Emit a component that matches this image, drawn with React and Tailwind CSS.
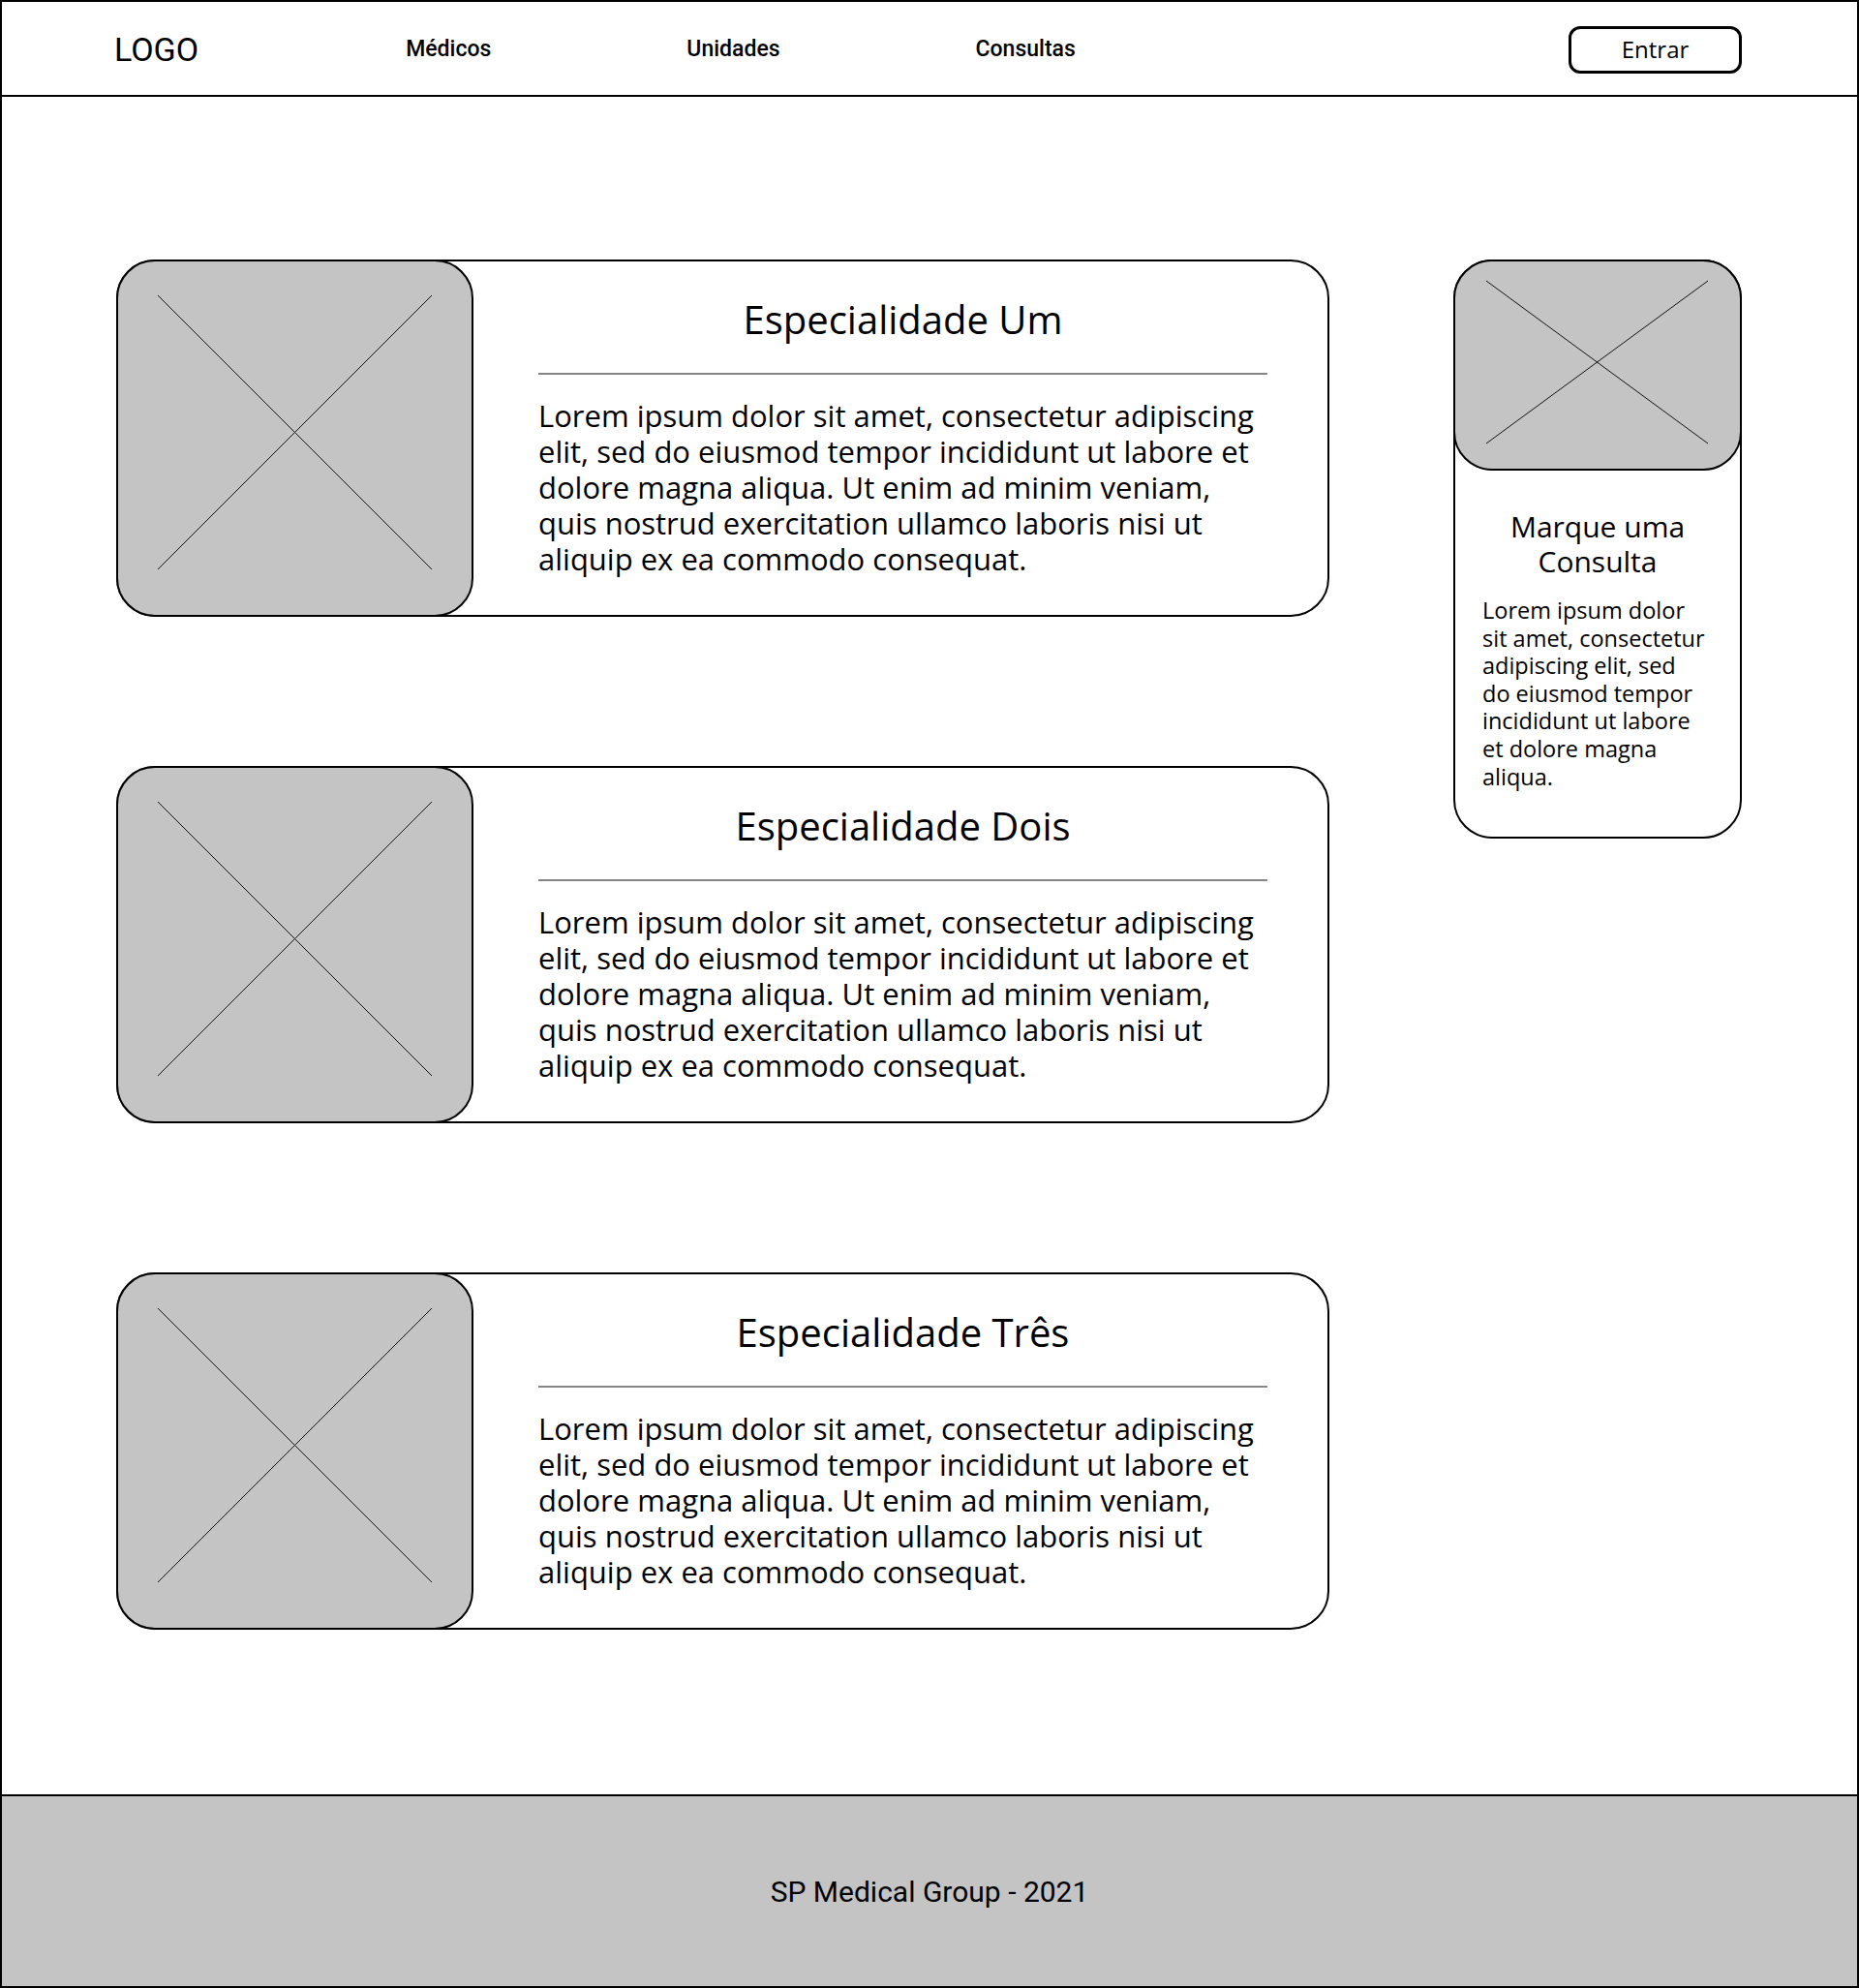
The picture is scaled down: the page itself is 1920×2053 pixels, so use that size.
import React from 'react'

const CARD_LINES = [
  'Lorem ipsum dolor sit amet, consectetur adipiscing',
  'elit, sed do eiusmod tempor incididunt ut labore et',
  'dolore magna aliqua. Ut enim ad minim veniam,',
  'quis nostrud exercitation ullamco laboris nisi ut',
  'aliquip ex ea commodo consequat.',
]

const SIDE_LINES = [
  'Lorem ipsum dolor',
  'sit amet, consectetur',
  'adipiscing elit, sed',
  'do eiusmod tempor',
  'incididunt ut labore',
  'et dolore magna',
  'aliqua.',
]

const ESPECIALIDADES = ['Especialidade Um', 'Especialidade Dois', 'Especialidade Três']

const ubuntuLike = "font-['Open_Sans',sans-serif]"

// caixa cinza com um X, o placeholder de imagem do wireframe
function Placeholder({ w, h, a, b, className = '' }) {
  return (
    <div className={`bg-[#c4c4c4] border-2 border-black rounded-[40px] overflow-hidden ${className}`}>
      <svg width="100%" height="100%" viewBox={`0 0 ${w} ${h}`} preserveAspectRatio="none" className="block">
        <line x1={a[0]} y1={a[1]} x2={b[0]} y2={b[1]} stroke="#111" strokeWidth="1" />
        <line x1={b[0]} y1={a[1]} x2={a[0]} y2={b[1]} stroke="#111" strokeWidth="1" />
      </svg>
    </div>
  )
}

function SpecialtyCard({ title }) {
  return (
    <div className="flex h-[369px] border-2 border-black rounded-[40px] bg-white">
      <Placeholder w={365} h={365} a={[41, 35]} b={[324, 318]} className="-m-[2px] w-[369px] shrink-0" />
      <div className={`flex-1 pl-[69px] pr-[62px] pt-[37px] text-black ${ubuntuLike}`}>
        <h2 className="text-center text-[40px] leading-[46px] font-normal">{title}</h2>
        <div className="mt-[32px] h-[2px] bg-[#858585]" />
        <p className="mt-[24px] text-[31px] leading-[37px]">
          {CARD_LINES.map(line => (
            <span key={line} className="block whitespace-nowrap">{line}</span>
          ))}
        </p>
      </div>
    </div>
  )
}

function SideCard() {
  return (
    <div className={`flex flex-col h-[598px] border-2 border-black rounded-[40px] bg-white text-black ${ubuntuLike}`}>
      <Placeholder w={294} h={214} a={[32, 20]} b={[261, 188]} className="-mx-[2px] -mt-[2px] h-[218px]" />
      <h3 className="mt-[40px] text-center text-[30px] leading-[36px] font-normal">
        Marque uma
        <br />
        Consulta
      </h3>
      <p className="mt-[18px] pl-[28px] text-[23.5px] leading-[28.6px]">
        {SIDE_LINES.map(line => (
          <span key={line} className="block whitespace-nowrap">{line}</span>
        ))}
      </p>
    </div>
  )
}

export default function App() {
  return (
    <div className="min-h-screen flex flex-col border-2 border-black bg-white">
      {/* Header */}
      <header className="h-[98px] flex items-center border-b-2 border-black pl-[116px] pr-[119px] font-['Roboto',sans-serif] text-black">
        <span className="mt-[2px] text-[34px] leading-none">LOGO</span>
        <nav className="mt-[3px] ml-[214px] flex gap-[202px] text-[23px] font-medium">
          <a href="#">Médicos</a>
          <a href="#">Unidades</a>
          <a href="#">Consultas</a>
        </nav>
        <button
          type="button"
          className={`ml-auto mt-[2px] w-[179px] h-[49px] border-[3px] border-black rounded-[12px] text-[24px] ${ubuntuLike}`}
        >
          Entrar
        </button>
      </header>

      {/* Conteúdo */}
      <main className="flex-1 flex gap-[128px] pl-[118px] pr-[119px] pt-[168px] pb-[170px]">
        <div className="w-[1253px] flex flex-col gap-[154px]">
          {ESPECIALIDADES.map(t => (
            <SpecialtyCard key={t} title={t} />
          ))}
        </div>
        <div className="w-[298px]">
          <SideCard />
        </div>
      </main>

      {/* Footer */}
      <footer className="h-[198px] flex items-center justify-center border-t-2 border-black bg-[#c4c4c4] font-['Roboto',sans-serif] text-[30px] text-black">
        SP Medical Group - 2021
      </footer>
    </div>
  )
}
